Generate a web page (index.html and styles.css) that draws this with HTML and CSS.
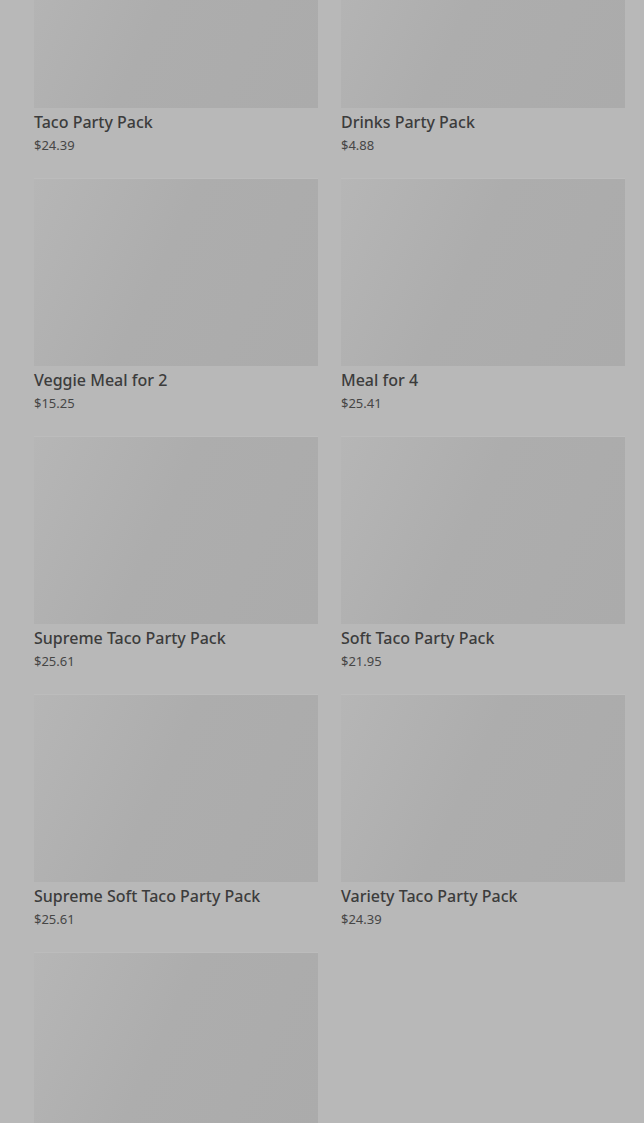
FILE: index.html
```html
<!DOCTYPE html>
<html lang="en">
<head>
    <meta charset="UTF-8">
    <meta name="viewport" content="width=device-width, initial-scale=1.0">
    <title>Party Packs</title>
    <link rel="stylesheet" href="styles.css">
</head>
<body>

    <!-- Product grid (page scrolled, dimmed behind overlay) -->
    <div class="product-grid">
        <div class="product">
            <div class="product-image"></div>
            <div class="product-name">Taco Party Pack</div>
            <div class="product-price">$24.39</div>
        </div>
        <div class="product">
            <div class="product-image"></div>
            <div class="product-name">Drinks Party Pack</div>
            <div class="product-price">$4.88</div>
        </div>
        <div class="product">
            <div class="product-image"></div>
            <div class="product-name">Veggie Meal for 2</div>
            <div class="product-price">$15.25</div>
        </div>
        <div class="product">
            <div class="product-image"></div>
            <div class="product-name">Meal for 4</div>
            <div class="product-price">$25.41</div>
        </div>
        <div class="product">
            <div class="product-image"></div>
            <div class="product-name">Supreme Taco Party Pack</div>
            <div class="product-price">$25.61</div>
        </div>
        <div class="product">
            <div class="product-image"></div>
            <div class="product-name">Soft Taco Party Pack</div>
            <div class="product-price">$21.95</div>
        </div>
        <div class="product">
            <div class="product-image"></div>
            <div class="product-name">Supreme Soft Taco Party Pack</div>
            <div class="product-price">$25.61</div>
        </div>
        <div class="product">
            <div class="product-image"></div>
            <div class="product-name">Variety Taco Party Pack</div>
            <div class="product-price">$24.39</div>
        </div>
        <div class="product">
            <div class="product-image"></div>
        </div>
    </div>

</body>
</html>
```

FILE: styles.css
```css
body, html {
    margin: 0;
    padding: 0;
    width: 100%;
    height: 100%;
    overflow: hidden;
    font-family: "Noto Sans", Arial, sans-serif;
}

body {
    background-color: #b8b8b8;
}

.product-grid {
    display: grid;
    grid-template-columns: 284px 284px;
    column-gap: 23px;
    row-gap: 22px;
    margin-top: -80px;
    padding: 0 20px 0 34px;
}

.product-image {
    height: 188px;
    background: linear-gradient(115deg, #b6b6b6 0%, #adadad 45%, #ababab 100%);
    border-top: 1px solid #bcbcbc;
    box-sizing: border-box;
}

.product-name {
    margin-top: 3px;
    font-size: 16px;
    font-weight: 500;
    line-height: 22px;
    color: #3c3c3c;
}

.product-price {
    padding-top: 1px;
    font-size: 13px;
    line-height: 22px;
    color: #464646;
}
```
